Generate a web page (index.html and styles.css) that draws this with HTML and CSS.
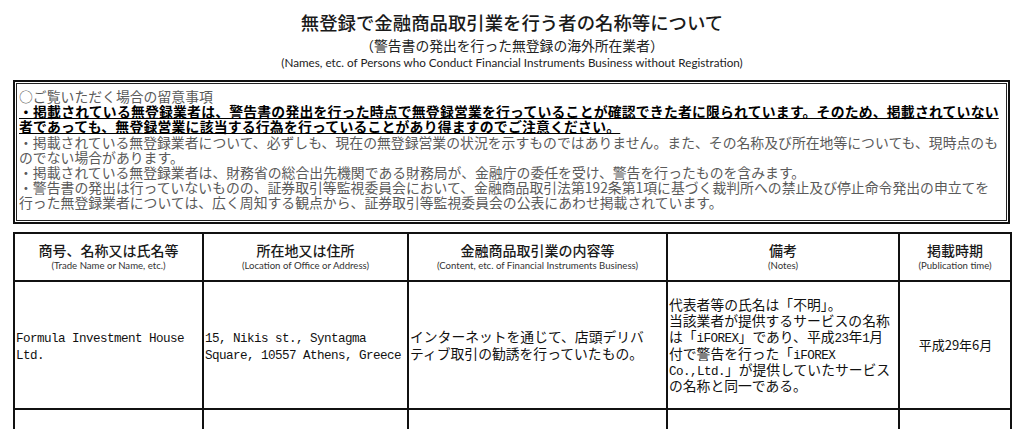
FILE: index.html
```html
<!DOCTYPE html>
<html lang="ja">
<head>
<meta charset="utf-8">
<link rel="stylesheet" href="styles.css">
</head>
<body>
<header class="head">
  <h1 class="title">無登録で金融商品取引業を行う者の名称等について</h1>
  <p class="subtitle">（警告書の発出を行った無登録の海外所在業者）</p>
  <p class="entitle">(Names, etc. of Persons who Conduct Financial Instruments Business without Registration)</p>
</header>

<section class="notice">
  <div class="notice-inner">
    <p class="line">○ご覧いただく場合の留意事項</p>
    <p class="line strong"><u>・掲載されている無登録業者は、警告書の発出を行った時点で無登録営業を行っていることが確認できた者に限られています。そのため、掲載されていない</u></p>
    <p class="line strong"><u>者であっても、無登録営業に該当する行為を行っていることがあり得ますのでご注意ください。</u></p>
    <p class="line">・掲載されている無登録業者について、必ずしも、現在の無登録営業の状況を示すものではありません。また、その名称及び所在地等についても、現時点のも</p>
    <p class="line">のでない場合があります。</p>
    <p class="line">・掲載されている無登録業者は、財務省の総合出先機関である財務局が、金融庁の委任を受け、警告を行ったものを含みます。</p>
    <p class="line">・警告書の発出は行っていないものの、証券取引等監視委員会において、金融商品取引法第192条第1項に基づく裁判所への禁止及び停止命令発出の申立てを</p>
    <p class="line">行った無登録業者については、広く周知する観点から、証券取引等監視委員会の公表にあわせ掲載されています。</p>
  </div>
</section>

<table class="list">
  <colgroup>
    <col class="c1"><col class="c2"><col class="c3"><col class="c4"><col class="c5">
  </colgroup>
  <thead>
    <tr>
      <th><span class="jp">商号、名称又は氏名等</span><span class="en">(Trade Name or Name, etc.)</span></th>
      <th><span class="jp">所在地又は住所</span><span class="en">(Location of Office or Address)</span></th>
      <th><span class="jp">金融商品取引業の内容等</span><span class="en">(Content, etc. of Financial Instruments Business)</span></th>
      <th><span class="jp">備考</span><span class="en">(Notes)</span></th>
      <th><span class="jp">掲載時期</span><span class="en">(Publication time)</span></th>
    </tr>
  </thead>
  <tbody>
    <tr class="row">
      <td class="cell"><span class="lat">Formula Investment House<br>Ltd.</span></td>
      <td class="cell"><span class="lat">15, Nikis st., Syntagma<br>Square, 10557 Athens, Greece</span></td>
      <td class="cell">インターネットを通じて、店頭デリバ<br>ティブ取引の勧誘を行っていたもの。</td>
      <td class="cell">代表者等の氏名は「不明」。<br>当該業者が提供するサービスの名称<br>は「<span class="lat">iFOREX</span>」であり、平成<span class="lat">23</span>年<span class="lat">1</span>月<br>付で警告を行った「<span class="lat">iFOREX</span><br><span class="lat">Co.,Ltd.</span>」が提供していたサービス<br>の名称と同一である。</td>
      <td class="cell date">平成29年6月</td>
    </tr>
    <tr class="row next">
      <td></td><td></td><td></td><td></td><td></td>
    </tr>
  </tbody>
</table>
</body>
</html>
```

FILE: styles.css
```css
html, body {
  margin: 0;
  padding: 0;
  background: #fff;
}

body {
  font-family: "Noto Sans CJK JP", "Noto Sans", sans-serif;
  color: #111;
  overflow: hidden;
}

.head {
  text-align: center;
  padding-top: 9px;
}

.title {
  margin: 0;
  font-size: 18.4px;
  line-height: 26px;
  font-weight: 500;
  color: #1a1a1a;
}

.subtitle {
  margin: 0;
  font-size: 13.8px;
  line-height: 20px;
  font-weight: 400;
  color: #222;
}

.entitle {
  margin: 0;
  font-family: "Lato", "Open Sans", sans-serif;
  font-size: 11.7px;
  line-height: 15px;
  color: #222;
}

.notice {
  margin: 10px 14px 0 13px;
  border: 2px solid #111;
  padding: 1px;
}

.notice-inner {
  border: 1px solid #222;
  padding: 5px 0 9px 2px;
}

.line {
  margin: 0;
  font-size: 13.85px;
  line-height: 15.2px;
  white-space: nowrap;
  color: #5a5a5a;
  font-weight: 400;
}

.line.strong {
  color: #000;
  font-weight: 700;
  letter-spacing: 0.2px;
}

.line.strong u {
  text-decoration-thickness: 1px;
  text-underline-offset: 1px;
}

.list {
  margin: 8px 0 0 13px;
  border-collapse: collapse;
  table-layout: fixed;
  width: 997px;
}

.c1 { width: 189px; }
.c2 { width: 205px; }
.c3 { width: 259px; }
.c4 { width: 232px; }
.c5 { width: 112px; }

.list th,
.list td {
  border: 2px solid #111;
  padding: 0;
}

.list th {
  height: 45px;
  text-align: center;
  vertical-align: middle;
  font-weight: 500;
  padding-bottom: 1px;
}

.jp {
  display: block;
  font-size: 14px;
  line-height: 18px;
  color: #1a1a1a;
}

.en {
  display: block;
  font-family: "Lato", "Open Sans", sans-serif;
  font-size: 9.6px;
  line-height: 13px;
  font-weight: 400;
  color: #333;
}

.row .cell {
  height: 126px;
  vertical-align: middle;
  text-align: left;
  font-size: 13.8px;
  line-height: 16.2px;
  padding: 0 0 0 1px;
  color: #111;
  white-space: nowrap;
  overflow: hidden;
}

.lat {
  font-family: "Liberation Mono", "DejaVu Sans Mono", monospace;
  font-size: 12.6px;
  letter-spacing: -0.56px;
  line-height: 0.8;
}

.row .cell.date {
  text-align: center;
  font-size: 13px;
}

.row.next td {
  height: 60px;
}
```
